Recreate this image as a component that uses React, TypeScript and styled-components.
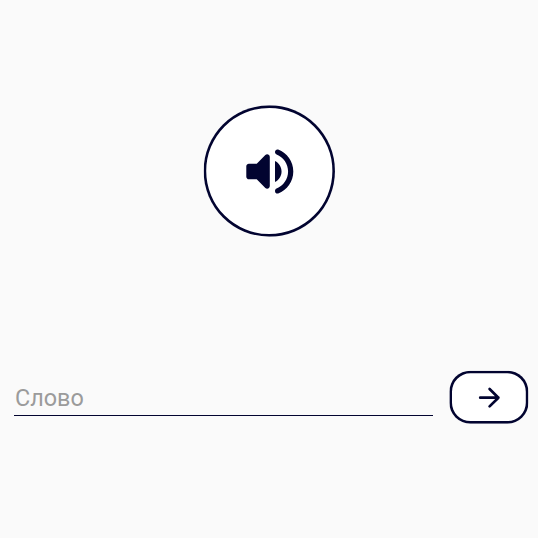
import React from 'react';
import styled, { createGlobalStyle } from 'styled-components';

const ink = '#020430';

const GlobalStyle = createGlobalStyle`
  * { box-sizing: border-box; }
  body { margin: 0; background: #fafafa; }
`;

const Screen = styled.main`
  height: 538px;
  padding: 105px 10px 0 14px;
  display: flex;
  flex-direction: column;
  background: #fafafa;
  font-family: Roboto, sans-serif;
  overflow: hidden;
`;

const OutlinedButton = styled.button`
  flex: none;
  padding: 0;
  display: flex;
  align-items: center;
  justify-content: center;
  border: 0;
  box-shadow: inset 0 0 0 2.6px ${ink};
  background: #fff;
  color: ${ink};
`;

const SoundButton = styled(OutlinedButton)`
  width: 132px;
  height: 132px;
  margin: 0 0 134px 189px;
  border-radius: 50%;
  transform: translateX(0.3px) scale(0.995);
`;

const AnswerRow = styled.form`
  display: flex;
  gap: 16px;
`;

const WordInput = styled.input`
  flex: 1;
  min-width: 0;
  height: 45px;
  padding: 9px 0 0 1px;
  border: 0;
  border-bottom: 1px solid ${ink};
  border-radius: 0;
  outline: 0;
  background: transparent;
  color: ${ink};
  font: 400 23.4px/28px Roboto, sans-serif;
  &::placeholder { color: #9b9b9b; opacity: 1; }
`;

const NextButton = styled(OutlinedButton)`
  width: 79px;
  height: 53px;
  border-radius: 21px;
  transform: translate(0.4px, -0.3px);
`;

export default function App() {
  return (
    <>
      <GlobalStyle />
      <Screen>
        <SoundButton type="button">
          <svg width="63" height="63" viewBox="0 0 24 24" fill="currentColor">
            <path d="M3 10v4c0 .55.45 1 1 1h3l3.29 3.29c.63.63 1.71.18 1.71-.71V6.41c0-.89-1.08-1.34-1.71-.71L7 9H4c-.55 0-1 .45-1 1zm11-2.03v8.05c1.48-.73 2.5-2.25 2.5-4.02S15.48 8.71 14 7.97zM14 4.45v.2c0 .38.25.71.6.85C17.18 6.53 19 9.06 19 12s-1.82 5.47-4.4 6.5c-.36.14-.6.47-.6.85v.2c0 .63.63 1.07 1.21.85C18.6 19.11 21 15.84 21 12s-2.4-7.11-5.79-8.4c-.58-.23-1.21.22-1.21.85z" />
          </svg>
        </SoundButton>
        <AnswerRow>
          <WordInput placeholder="Слово" />
          <NextButton type="button">
            <svg
              width="24"
              height="24"
              viewBox="0 0 24 24"
              fill="none"
              stroke="currentColor"
              strokeWidth="2.7"
              strokeLinecap="round"
              strokeLinejoin="round"
            >
              <path d="M2.8 12h18.2M12.2 3.3l8.8 8.7-8.8 8.7" />
            </svg>
          </NextButton>
        </AnswerRow>
      </Screen>
    </>
  );
}
